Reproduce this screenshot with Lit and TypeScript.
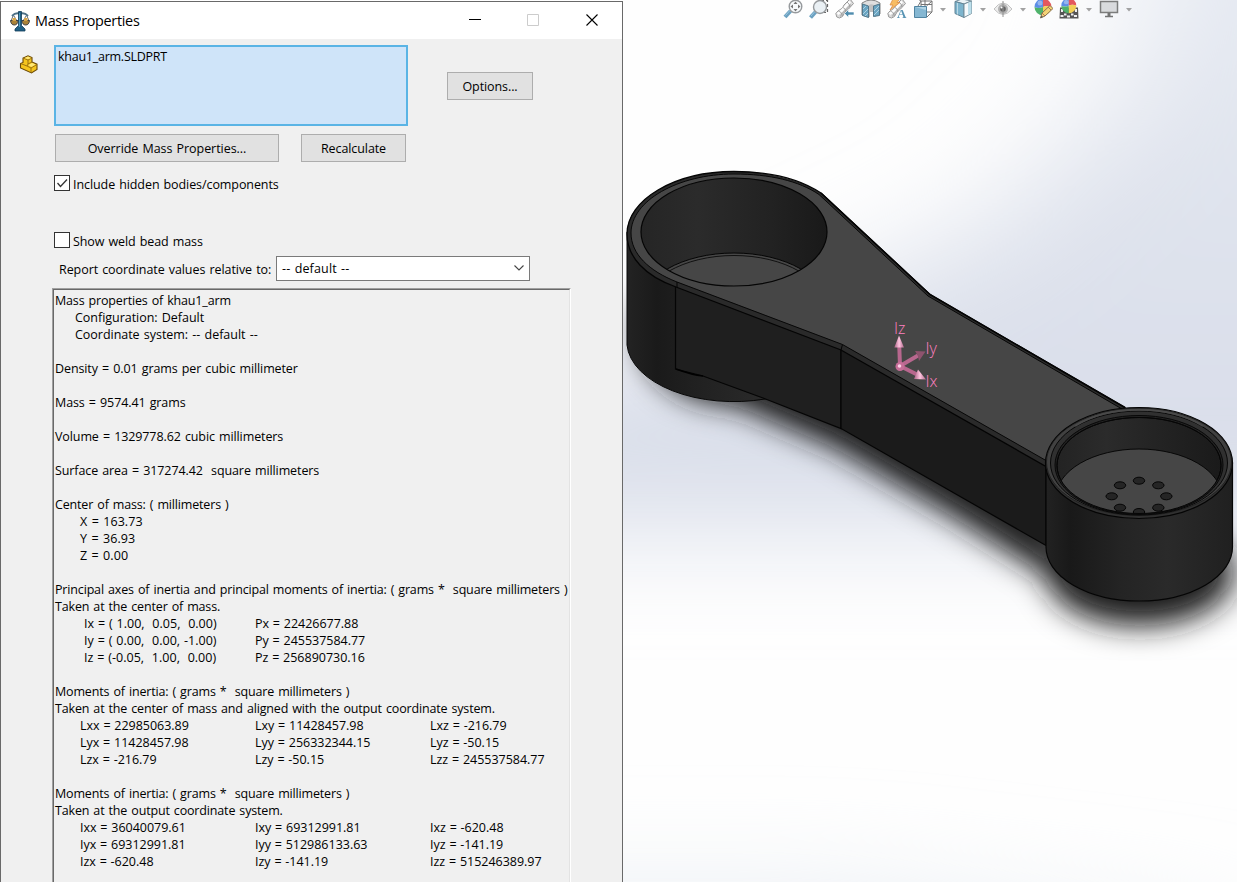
import { LitElement, html, svg, css } from "lit";
import { customElement } from "lit/decorators.js";

const sheet: string[][] = [
  ["0|Mass properties of khau1_arm"],
  ["20|Configuration: Default"],
  ["20|Coordinate system: -- default --"],
  [],
  ["0|Density = 0.01 grams per cubic millimeter"],
  [],
  ["0|Mass = 9574.41 grams"],
  [],
  ["0|Volume = 1329778.62 cubic millimeters"],
  [],
  ["0|Surface area = 317274.42  square millimeters"],
  [],
  ["0|Center of mass: ( millimeters )"],
  ["25|X = 163.73"],
  ["25|Y = 36.93"],
  ["25|Z = 0.00"],
  [],
  ["0|Principal axes of inertia and principal moments of inertia: ( grams *  square millimeters )"],
  ["0|Taken at the center of mass."],
  ["29|Ix = ( 1.00,  0.05,  0.00)", "Px = 22426677.88"],
  ["29|Iy = ( 0.00,  0.00, -1.00)", "Py = 245537584.77"],
  ["29|Iz = (-0.05,  1.00,  0.00)", "Pz = 256890730.16"],
  [],
  ["0|Moments of inertia: ( grams *  square millimeters )"],
  ["0|Taken at the center of mass and aligned with the output coordinate system."],
  ["25|Lxx = 22985063.89", "Lxy = 11428457.98", "Lxz = -216.79"],
  ["25|Lyx = 11428457.98", "Lyy = 256332344.15", "Lyz = -50.15"],
  ["25|Lzx = -216.79", "Lzy = -50.15", "Lzz = 245537584.77"],
  [],
  ["0|Moments of inertia: ( grams *  square millimeters )"],
  ["0|Taken at the output coordinate system."],
  ["25|Ixx = 36040079.61", "Ixy = 69312991.81", "Ixz = -620.48"],
  ["25|Iyx = 69312991.81", "Iyy = 512986133.63", "Iyz = -141.19"],
  ["25|Izx = -620.48", "Izy = -141.19", "Izz = 515246389.97"],
];

@customElement("mass-dialog")
class MassDialog extends LitElement {
  static styles = css`
    :host {
      display: flex; flex-direction: column; box-sizing: border-box;
      width: 623px; height: 881px; margin-top: 1px; overflow: hidden;
      border: 1px solid #696969; border-bottom: 0; background: #f0f0f0;
      font: 12.5px/17px "Open Sans", "Noto Sans", sans-serif; color: #000;
      letter-spacing: -.09px; word-spacing: .9px;
    }
    .title { display: flex; align-items: center; height: 37px; flex: none; background: #fff; padding: 0 20px 0 9px; }
    .title h1 { font-size: 14.4px; font-weight: 400; margin: 0 0 0 5px; flex: 1; line-height: 20px; letter-spacing: -.3px; }
    .caps { display: flex; gap: 38px; }
    .caps svg { width: 20px; height: 20px; display: block; position: relative; top: -1px; }
    .caps svg:not(:last-child) { left: -1px; }
    .top { display: flex; padding: 6px 0 0 18px; align-items: flex-start; flex: none; }
    .part { margin: 10px 15px 0 0; width: 20px; height: 20px; flex: none; }
    .list { box-sizing: border-box; width: 354px; height: 81px; border: 2px solid #5ab4e5; background: #cfe4f9; padding: 1px 2px; flex: none; letter-spacing: -.25px; }
    button {
      font: inherit; letter-spacing: inherit; word-spacing: inherit; color: #000; background: #e1e1e1; border: 1px solid #adadad;
      height: 28px; padding: 1px 0 0; box-sizing: border-box; border-radius: 0;
    }
    .opt { width: 86px; margin: 27px 0 0 39px; }
    .btns { display: flex; gap: 22px; padding: 8px 0 0 54px; flex: none; }
    .override { width: 224px; letter-spacing: -.04px; }
    .recalc { width: 105px; }
    .check { display: flex; align-items: center; gap: 3px; height: 18px; margin-left: 53px; flex: none; letter-spacing: -.08px; }
    .check span { padding-top: 2px; }
    .c1 { margin-top: 12px; }
    .c2 { margin-top: 39px; }
    .box { box-sizing: border-box; width: 16px; height: 16px; border: 1px solid #333; background: #fff; margin-bottom: 1px; }
    .box svg { display: block; }
    .coord { display: flex; align-items: center; gap: 4px; margin: 7px 0 0 58px; flex: none; height: 25px; }
    .coord label { width: 213px; white-space: nowrap; padding-top: 1px; letter-spacing: -.06px; }
    .select { box-sizing: border-box; width: 254px; height: 25px; border: 1px solid #7a7a7a; background: #fff; display: flex; align-items: center; justify-content: space-between; padding: 0 4px 1px 5px; letter-spacing: .15px; }
    .report { margin: 7px 0 0 51px; width: 519px; box-sizing: border-box; flex: 1; border-top: 1px solid #a0a0a0; border-left: 1px solid #a0a0a0; border-right: 1px solid #fff; }
    .inner { height: 100%; border-top: 1px solid #696969; border-left: 1px solid #696969; border-right: 1px solid #e3e3e3; padding: 2px 0 0 1px; }
    .line { display: grid; grid-template-columns: 200px 175px 130px; height: 17px; white-space: pre; letter-spacing: -.02px; word-spacing: .6px; }
    .free { display: block; letter-spacing: -.16px; word-spacing: 1px; }
    .value { letter-spacing: -.1px; }
    .i20 { padding-left: 20px; letter-spacing: -.03px; }
    .i25 { padding-left: 25px; }
    .i29 { padding-left: 29px; letter-spacing: .02px; }
    .free .i25 { letter-spacing: .08px; }
  `;

  render() {
    return html`
      <div class="title">
        <svg width="20" height="22" viewBox="0 0 20 22">
          <path d="M2 6 Q6 2 10 4 Q14 2 18 6" fill="none" stroke="#4d7086" stroke-width="2" />
          <path d="M3 6 1 11H7L4 6M16 6 13 11H19L17 6" fill="none" stroke="#6a7075" />
          <path d="M.5 10.500H8.200Q7.500 15 4.300 15T.5 10.500M11.800 10.500H19.500Q19 15 15.700 15T11.800 10.500" fill="#a98239" stroke="#3e4246" stroke-width="1" />
          <path d="M2.500 8h3.500v3H2.500zM14 8h3.500v3H14z" fill="#d7a64b" />
          <path d="M8.500 1.500h3V15.500l3.500 3.500v2h-10v-2l3.500-3.500z" fill="#1f5f85" stroke="#123c58" stroke-width=".8" />
          <path d="M9.500 3v14" stroke="#4f9bc0" />
        </svg>
        <h1>Mass Properties</h1>
        <div class="caps">
          <svg viewBox="0 0 20 20"><path d="M4 9.500h12" stroke="#000" /></svg>
          <svg viewBox="0 0 20 20"><path d="M4.500 4.500h11v11h-11z" fill="none" stroke="#ccc" /></svg>
          <svg viewBox="0 0 20 20"><path d="M4.500 4.500 15.500 15.500M15.500 4.500 4.500 15.500" stroke="#000" stroke-width="1.100" /></svg>
        </div>
      </div>
      <div class="top">
        <svg class="part" viewBox="0 0 20 20">
          <path d="M1.500 8.500 4 7.500V3L9 .8 13 2.500V7L18 9.200V14.500L12.500 18 1.500 13z" fill="#f6c51d" stroke="#6b4a08" stroke-width="1.100" />
          <path d="M4 3 9 5 13 3M9 5V9M1.500 8.500 8 11 12 13 18 9.500M12 13V18M8 11 9 9 13 7" fill="none" stroke="#926a0d" stroke-width=".9" />
          <path d="M5.500 2.900 9 1.500 12 2.900 9 4.200zM9.500 10 13 8 16.500 9.500 12.300 11.900z" fill="#ffe878" />
        </svg>
        <div class="list">khau1_arm.SLDPRT</div>
        <button class="opt">Options...</button>
      </div>
      <div class="btns">
        <button class="override">Override Mass Properties...</button>
        <button class="recalc">Recalculate</button>
      </div>
      <div class="check c1">
        <div class="box"><svg width="14" height="14"><path d="M2.500 7 5.500 10.500 12 3.500" fill="none" stroke="#333" stroke-width="1.300" /></svg></div>
        <span>Include hidden bodies/components</span>
      </div>
      <div class="check c2"><div class="box"></div><span>Show weld bead mass</span></div>
      <div class="coord">
        <label>Report coordinate values relative to:</label>
        <div class="select">
          <span>-- default --</span>
          <svg width="12" height="8"><path d="M1.500 1.500 6 6 10.500 1.500" fill="none" stroke="#444" stroke-width="1.100" /></svg>
        </div>
      </div>
      <div class="report"><div class="inner">
        ${sheet.map((cells) => html`<div class="line ${cells.length < 2 ? "free" : ""} ${cells[0]?.includes(" = ") && cells.length < 2 ? "value" : ""}">${cells.map((cell, i) => {
          const [indent, text] = i ? ["0", cell] : cell.split("|");
          return html`<span class="i${indent}">${text}</span>`;
        })}</div>`)}
      </div></div>`;
  }
}

const ball = svg`
  <path d="M10 7V-1.500A8.500 8.500 0 0 0 1.500 7Q5 9 10 7" fill="#4c83e4"/>
  <path d="M10 7V-1.500A8.500 8.500 0 0 1 18.500 7Q14 5 10 7" fill="#e2474d"/>
  <path d="M10 7Q5 9 1.500 7A8.500 8.500 0 0 0 10 15.500z" fill="#3dab5c"/>
  <path d="M10 7Q14 5 18.500 7A8.500 8.500 0 0 1 10 15.500z" fill="#f2cb45"/>
  <circle cx="7" cy="3" r="2.500" fill="#fff" opacity=".35"/>`;

const scope = svg`
  <path d="M.8 13.500 3 11 7.500 8 9 5 15 -1 18.500 3.500 13.500 9 10 12 7.500 16.500 4.500 18 1.800 17z" fill="#d9d9d9" stroke="#8f8f8f"/>
  <path d="M2.500 14 7 10.500 15 1.500" stroke="#fff" stroke-width="2.500" fill="none"/>
  <path d="M5 16.500 9 11.500 16 4.500" stroke="#b0b0b0" stroke-width="1.500" fill="none"/>
  <path d="M3.500 11Q7 12 7.500 16M8 7.500Q10.500 8.500 11 11.500M12 2Q14.500 3.500 15 7" stroke="#8c8c8c" fill="none" stroke-width=".8"/>`;

const icons = [
  svg`<path d="M2 17 7.500 11" stroke="#5c98bb" stroke-width="4"/><path d="M2.500 15.500 6.500 11" stroke="#91bfda"/>
    <circle cx="12.500" cy="6.500" r="6.300" fill="#f7fafc" stroke="#8b8f92" stroke-width="1.400"/>
    <path d="M12.500 1.500 14.500 4h-4zM12.500 11.500 14.500 9h-4zM7.500 6.500 10 4.500v4zM17.500 6.500 15 4.500v4z" fill="#666"/>`,
  svg`<path d="M12 .5H18.500V12.500H15" fill="none" stroke="#555" stroke-width="1.200" stroke-dasharray="3 2"/>
    <path d="M1.500 17.500 6.500 12" stroke="#5c98bb" stroke-width="4"/><path d="M2 16 5.500 12" stroke="#91bfda"/>
    <circle cx="11" cy="7" r="6.500" fill="#e8eff4" stroke="#8b8f92" stroke-width="1.400"/>`,
  svg`${scope}<path d="M9.500 13.500 13.500 9.500V12H19V15H13.500V17.500z" fill="#3d80a5" stroke="#fff" stroke-width=".6"/>`,
  svg`<path d="M1 3Q10 -3 19 3V14L14 16V7Q10 5 8 7V17L1 15z" fill="#dcdcdc" stroke="#777"/>
    <path d="M8 5Q10 3.500 13 5V12H8z" fill="#bbb"/>
    <path d="M1.500 4 7.500 6V17.500L1.500 15.500zM12.500 6 18.500 4V15.500L12.500 16.500z" fill="#5b9cbc" stroke="#42697e"/>
    <path d="M2 9 5 6M2 14 7 9M4 16 7 13M13 11 18 6M13 15 18 10" stroke="#c8e3ee" stroke-width=".7"/>`,
  svg`${scope}<path d="M6 -1H13L10 2.500H13L3 10 6 5H3z" fill="#f8b552" stroke="#d88336" stroke-width=".8"/>
    <text class="letter" x="10" y="18">A</text>`,
  svg`<path d="M5 6 8 1H19V12L14 17M8 1V12H19M13.500 6 19 1M12 -1V12M8 4.500H19M5 -1 8 1" fill="none" stroke="#666"/>
    <path d="M1.500 6.500H13.500V17.500H1.500z" fill="#79b0ce" stroke="#3f7797"/><path d="M2 7H13V10z" fill="#a9d0e3"/>`,
  null,
  svg`<path d="M2 1.500 9 -1 18.500 1 11 4z" fill="#e8f2f6" stroke="#668391"/><path d="M2 1.500 11 4V17.500L2 13.500z" fill="#6fadc8" stroke="#52778a"/>
    <path d="M11 4 18.500 1V13.500L11 17.500z" fill="#f5f9fb" stroke="#668391"/><path d="M15 3 18.500 1.500V13L15 15z" fill="#b5dce9"/><path d="M4.500 3V14.500" stroke="#b4d7e5"/>`,
  null,
  svg`<path d="M1 9Q10 -3 19 9Q10 20 1 9z" fill="#ececec" stroke="#bbb"/><circle cx="10" cy="9" r="5" fill="#aaa"/><circle cx="10" cy="9" r="2.800" fill="#555"/><path d="M10 1V17" stroke="#888"/><circle cx="8.500" cy="7.500" r="1" fill="#fff"/>`,
  null,
  svg`${ball}<path d="M7.500 18 9 13 17 5.500 20 8.500 12 16z" fill="#f3cf68" stroke="#79633e"/><path d="M15 7 18 10M9 13 12 16" stroke="#a6653e"/><path d="M7.500 18 8.500 15.500 10 17z" fill="#444"/>`,
  svg`<path d="M1 7.500H19L19.500 18.500H.5z" fill="#444"/><path d="M2 9h2v3H2zM16 9h2v3h-2zM1.500 15h3v2h-3zM8 15.500h3v2H8zM15 15h3v2h-3zM5 13.500h2.500v2H5zM12 13.500h2.500v2h-2.500z" fill="#eee"/>
    <g transform="translate(1 -.5) scale(.88)">${ball}</g>`,
  null,
  svg`<path d="M1.500 1.500H18.500V12.500H1.500z" fill="#d6d8da" stroke="#6f6f6f" stroke-width="1.500"/><path d="M10 13V16" stroke="#666" stroke-width="3"/><path d="M6 16.500H14" stroke="#666" stroke-width="1.500"/>`,
  null,
];

const holes = [[1139, 480.7], [1120, 485.3], [1158.3, 485.3], [1111.7, 496.3], [1166.3, 496.3], [1120, 507.7], [1158.3, 507.7], [1139, 512]];

@customElement("part-view")
class PartView extends LitElement {
  static styles = css`
    :host { display: block; position: relative; flex: 1; height: 882px; overflow: hidden; background: #fefefe; }
    .scene { display: block; }
    .bar { position: absolute; top: 0; left: 160px; display: flex; gap: 6px; opacity: .9; }
    .icon { width: 20px; height: 20px; display: block; }
    .drop { width: 8px; height: 20px; display: block; }
    .letter { font: bold 13px "Liberation Serif", serif; fill: #4688ab; }
    .axis { font: 300 16px "Open Sans", "Noto Sans", sans-serif; fill: #ff80c0; }
  `;

  render() {
    return html`
      <svg class="scene" width="614" height="882" viewBox="623 0 614 882">
        <defs>
          <filter id="soft" filterUnits="userSpaceOnUse" x="300" y="-300" width="1300" height="1400"><feGaussianBlur stdDeviation="64 54" /></filter>
          <filter id="shade" x="-30%" y="-30%" width="160%" height="160%"><feGaussianBlur stdDeviation="15" /></filter>
          <linearGradient id="sky" gradientUnits="userSpaceOnUse" x1="0" y1="0" x2="0" y2="500"><stop offset="0" stop-color="#e6eaf2" /><stop offset=".4" stop-color="#dfe3ed" /><stop offset="1" stop-color="#d8dde9" /></linearGradient>
          <linearGradient id="wall" gradientUnits="userSpaceOnUse" x1="641" x2="827" y1="0" y2="0"><stop offset="0" stop-color="#252525" /><stop offset=".3" stop-color="#2b2b2b" /><stop offset=".7" stop-color="#222" /><stop offset="1" stop-color="#191919" /></linearGradient>
          <linearGradient id="wall2" gradientUnits="userSpaceOnUse" x1="1057" x2="1222" y1="0" y2="0"><stop offset="0" stop-color="#232323" /><stop offset=".3" stop-color="#2b2b2b" /><stop offset="1" stop-color="#1a1a1a" /></linearGradient>
          <linearGradient id="side" gradientUnits="userSpaceOnUse" x1="627" x2="841" y1="0" y2="0"><stop offset="0" stop-color="#232323" /><stop offset=".14" stop-color="#1a1a1a" /><stop offset=".3" stop-color="#202020" /><stop offset=".6" stop-color="#292929" /></linearGradient>
          <linearGradient id="side2" gradientUnits="userSpaceOnUse" x1="1046" x2="1233" y1="0" y2="0"><stop offset="0" stop-color="#222" /><stop offset=".13" stop-color="#191919" /><stop offset=".4" stop-color="#242424" /><stop offset=".65" stop-color="#2a2a2a" /><stop offset="1" stop-color="#202020" /></linearGradient>
          <linearGradient id="pink" x1="0" x2="1" y1="0" y2="0"><stop offset="0" stop-color="#a95f83" /><stop offset=".5" stop-color="#ffc5e0" /><stop offset="1" stop-color="#b0688b" /></linearGradient>
          <clipPath id="h1"><ellipse cx="734" cy="232" rx="93" ry="54" /></clipPath>
          <clipPath id="h2"><ellipse cx="1139" cy="465.500" rx="82" ry="48" /></clipPath>
        </defs>
        <path d="M400 390 780 320 980 225 1120 90 1170 -200H1500V530H400z" fill="url(#sky)" filter="url(#soft)" />
        <path d="M400 895H850L1237 940V1080H400z" fill="#e8edf3" filter="url(#soft)" />
        <g filter="url(#shade)">
          <path d="M642 300V350Q666 403 735 405L835 448 950 515 1050 578 1060 520 840 380 700 300z" fill="#1c1c1c" />
          <ellipse cx="1140" cy="573" rx="94" ry="53" fill="#1c1c1c" />
        </g>
        <path d="M627 232V345A107 60 0 0 0 765 399L840 380V300z" fill="url(#side)" stroke="#080808" />
        <path d="M675.500 286 841 349V428.500L763 398 703 376 675.500 369z" fill="#1f1f1f" stroke="#050505" stroke-width="1.200" />
        <path d="M676 369 Q692 375 703 376" fill="none" stroke="#000" stroke-width="1.500" />
        <path d="M841 349 1046 466V545.500L841 428.500z" fill="#1b1b1b" stroke="#050505" stroke-width="1.200" />
        <path d="M627 234C627 200 674 171.500 734 171.500C770 171.500 800 179 821 193L930 294.500 1125 407.500 1090 440 1046 466.500 841 350 676 287C645 276 627 257 627 234z" fill="#2a2a2a" stroke="#050505" stroke-width="1.300" />
        <path d="M631 233C631 201 678 174 734 174C770 174 799 181 819 194.500L928 296 1122 409 1090 435 1046 460.500 842.500 344.500 677 282C649 271 631 254 631 233z" fill="#464646" stroke="#070707" />
        <path d="M821 193 930 294.500 1125 407.500" fill="none" stroke="#050505" stroke-width="1.500" />
        <path d="M677 282V287M842.500 344.500 841 350" stroke="#050505" />
        <ellipse cx="734" cy="232" rx="93" ry="54" fill="url(#wall)" />
        <g clip-path="url(#h1)"><ellipse cx="734" cy="307" rx="94" ry="54" fill="#464646" stroke="#050505" /><ellipse cx="734" cy="309" rx="92" ry="53.500" fill="#464646" stroke="#111" /></g>
        <ellipse cx="734" cy="232" rx="93" ry="54" fill="none" stroke="#050505" stroke-width="1.200" />
        <path d="M1046 463V547A93.250 54 0 0 0 1232.500 547V463z" fill="url(#side2)" stroke="#050505" stroke-width="1.200" />
        <ellipse cx="1139" cy="463" rx="93.500" ry="55.500" fill="#303030" stroke="#050505" stroke-width="1.200" />
        <ellipse cx="1139" cy="462" rx="92.500" ry="53.500" fill="#414141" stroke="#171717" stroke-width=".7" />
        <ellipse cx="1139" cy="463" rx="88.500" ry="52" fill="#303030" stroke="#080808" />
        <path d="M1075 426A86 49 0 0 1 1203 426" fill="none" stroke="#494949" stroke-width="2" />
        <ellipse cx="1139" cy="465" rx="84" ry="49.500" fill="#222" stroke="#080808" />
        <ellipse cx="1139" cy="465.500" rx="82" ry="48" fill="url(#wall2)" stroke="#070707" />
        <g clip-path="url(#h2)">
          <ellipse cx="1139" cy="497.500" rx="83" ry="48.500" fill="#464646" stroke="#080808" />
          ${holes.map(([x, y]) => svg`<ellipse cx=${x} cy=${y} rx="5.700" ry="3.500" fill="#252525" stroke="#060606"/>`)}
        </g>
        <ellipse cx="1139" cy="465.500" rx="82" ry="48" fill="none" stroke="#060606" />
        <g stroke="#b8678e" stroke-width="4"><path d="M900 366 899.300 347M900 366 918 355.500M900 366 917 374.500" /></g>
        <path d="M899 335.500 904 347.500H894.300z" fill="url(#pink)" />
        <path d="M925.500 351.500 919 361 918 356 915 351z" fill="#8e536e" />
        <path d="M926 379.500 914 379 918 369.500z" fill="url(#pink)" />
        <circle cx="900" cy="366.500" r="4.500" fill="#c66e98" /><circle cx="899.500" cy="366" r="1.800" fill="#ffd1e7" />
        <text class="axis" x="894" y="334">Iz</text><text class="axis" x="925.500" y="353.500">Iy</text><text class="axis" x="925.500" y="387">Ix</text>
      </svg>
      <div class="bar">
        ${icons.map((glyph) => glyph
          ? html`<svg class="icon" viewBox="0 0 20 20">${glyph}</svg>`
          : html`<svg class="drop" viewBox="0 0 8 20"><path d="M1 8H7L4 11.500z" fill="#999" /></svg>`)}
      </div>`;
  }
}

@customElement("app-root")
class AppRoot extends LitElement {
  static styles = css`
    :host { display: flex; width: 1237px; height: 882px; overflow: hidden; background: #fff; }
  `;
  render() {
    return html`<mass-dialog></mass-dialog><part-view></part-view>`;
  }
}
